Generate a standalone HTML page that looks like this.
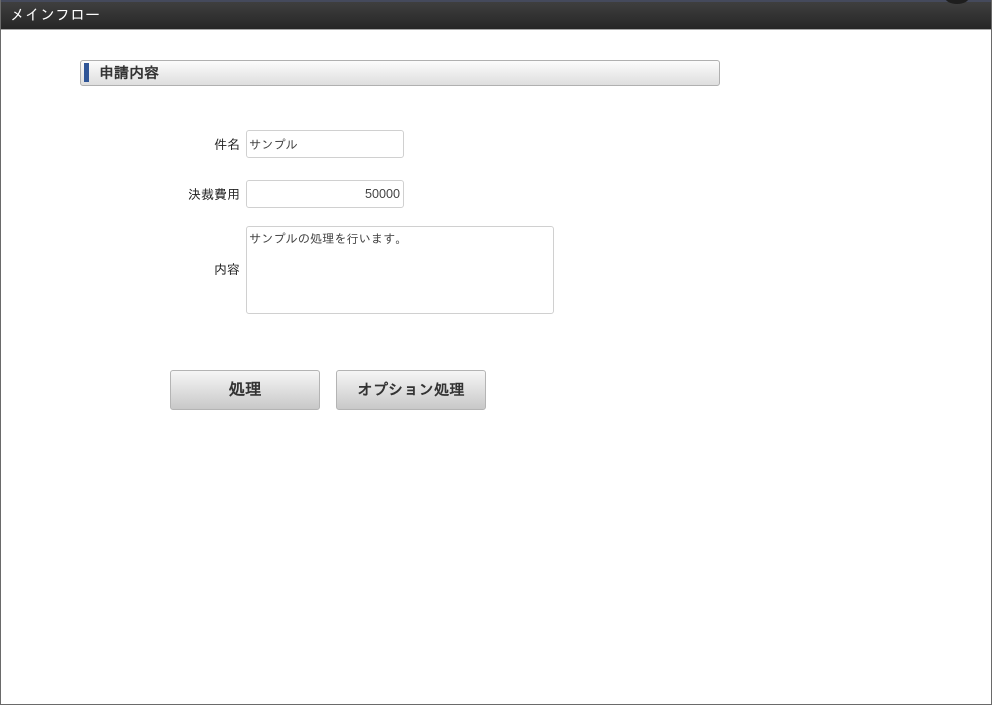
<!DOCTYPE html>
<html lang="ja">
<head>
<meta charset="utf-8">
<title>メインフロー</title>
<style>
html,body{margin:0;padding:0;background:#fff;}
body{position:relative;width:992px;height:705px;overflow:hidden;font-family:"Liberation Sans","IPAGothic","Noto Sans CJK JP",sans-serif;font-size:13px;color:#222;}
div{position:absolute;box-sizing:border-box;}
#frame{left:0;top:0;width:992px;height:705px;border:1px solid #6a6a6a;border-top:0;}
#bar{left:1px;top:0;width:990px;height:30px;background:linear-gradient(#3f3f3f,#262626);border-top:2px solid #454a5c;border-bottom:1px solid #a8a8a8;overflow:hidden;}
#title{left:9px;top:5px;color:#fff;font-size:15px;line-height:18px;white-space:nowrap;}
#knobtop{left:945px;top:-9px;width:24px;height:13px;border-radius:50%;background:#1e1e1e;}
#head{left:80px;top:60px;width:640px;height:26px;border:1px solid #b0b0b0;border-radius:3px;background:linear-gradient(#fcfcfc,#dedede);}
#mark{left:84px;top:63px;width:5px;height:19px;background:#2f5597;}
#headt{left:99px;top:65px;font-size:15px;line-height:18px;font-weight:bold;color:#333;white-space:nowrap;}
.lab{width:120px;left:120px;text-align:right;line-height:16px;color:#222;white-space:nowrap;}
.inp{left:246px;background:#fff;border:1px solid #d0d0d0;border-radius:3px;color:#444;font-size:12.2px;line-height:16px;white-space:nowrap;}
.btn{top:370px;width:150px;height:40px;border:1px solid #b4b4b4;border-radius:3px;background:linear-gradient(#f6f6f6,#c8c8c8);text-align:center;line-height:39px;font-weight:bold;color:#333;white-space:nowrap;}
</style>
</head>
<body>
<div id="frame"></div>
<div id="bar"><div id="title">メインフロー</div></div>
<div id="knobtop"></div>

<div id="head"></div>
<div id="mark"></div>
<div id="headt">申請内容</div>

<div class="lab" style="top:137px">件名</div>
<div class="inp" style="top:130px;width:158px;height:28px;padding:6px 2px 0 2px">サンプル</div>

<div class="lab" style="top:187px">決裁費用</div>
<div class="inp" style="top:180px;width:158px;height:28px;padding:5px 3px 0 3px;text-align:right;font-size:12.6px">50000</div>

<div class="lab" style="top:262px">内容</div>
<div class="inp" style="top:226px;width:308px;height:88px;padding:4px 2px">サンプルの処理を行います。</div>

<div class="btn" style="left:170px;font-size:16.5px">処理</div>
<div class="btn" style="left:336px;font-size:15.3px">オプション処理</div>
</body>
</html>
